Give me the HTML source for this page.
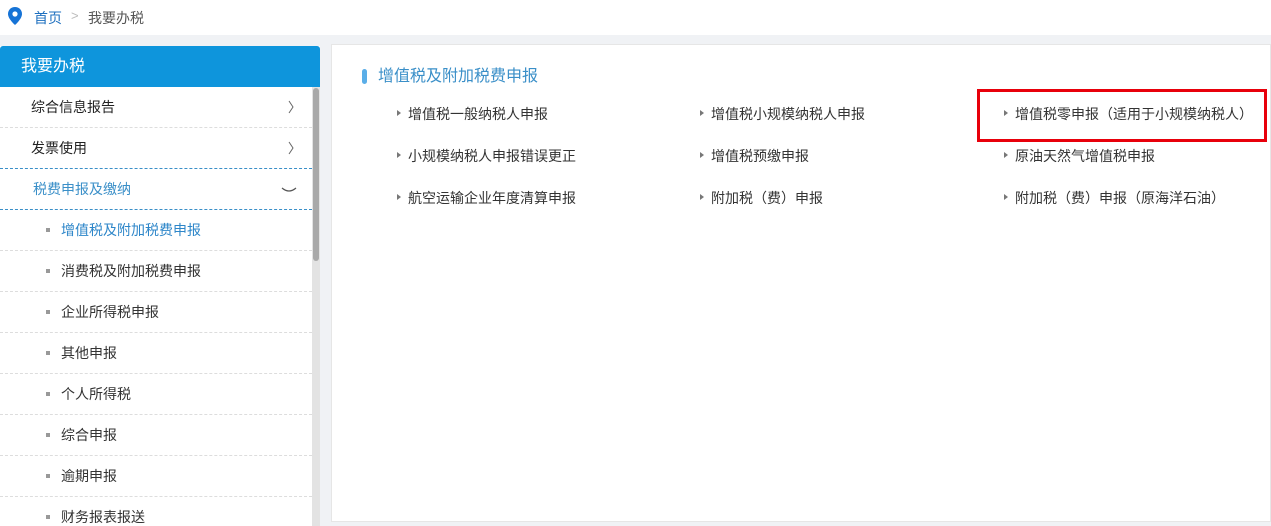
<!DOCTYPE html><html><head><meta charset="utf-8"><style>
*{margin:0;padding:0;box-sizing:border-box}
html,body{width:1271px;height:526px;overflow:hidden}
body{background:#f0f2f5;font-family:"Liberation Sans","Noto Sans CJK SC",sans-serif;font-size:14px;color:#333;position:relative}
.a{position:absolute}
.bc{left:0;top:0;width:1271px;height:35px;background:#fff}
.side{left:0;top:46px;width:320px;height:480px;background:#fff}
.hd{left:0;top:46px;width:320px;height:41px;background:#0e95dc;color:#fff;font-size:16px;line-height:41px;padding-left:21px;border-radius:3px 3px 0 0}
.row{left:0;width:312px;height:41px;line-height:40px;border-bottom:1px dashed #ddd}
.m{padding-left:31px;color:#222}
.s{padding-left:61px;color:#333}
.s:before{content:"";position:absolute;left:46px;top:18px;width:4px;height:4px;background:#999}
.arr{position:absolute;right:18px;top:13px}
.main{left:331px;top:44px;width:940px;height:478px;background:#fff;border:1px solid #e6e6e6}
.it{position:absolute;color:#333;font-size:14px;line-height:20px}
.it:before{content:"";position:absolute;left:-11px;top:6px;border-left:4px solid #777;border-top:3.5px solid transparent;border-bottom:3.5px solid transparent}
</style></head><body>
<div class="a bc"></div>
<svg class="a" style="left:8px;top:7px" width="14" height="18" viewBox="0 0 14 18"><path d="M7 0C3 0 0 3 0 7c0 5 7 11 7 11s7-6 7-11c0-4-3-7-7-7z" fill="#1673d6"/><circle cx="7" cy="7" r="2.6" fill="#fff"/></svg>
<div class="a" style="left:34px;top:8px;color:#1d6fbf">首页</div>
<div class="a" style="left:71px;top:8px;color:#bbb;font-size:13px">&gt;</div>
<div class="a" style="left:88px;top:8px;color:#555">我要办税</div>
<div class="a side"></div>
<div class="a hd">我要办税</div>
<div class="a" style="left:312px;top:87px;width:8px;height:439px;background:#e3e3e3"></div>
<div class="a" style="left:313px;top:88px;width:6px;height:173px;background:#a9a9a9;border-radius:3px"></div>
<div class="a row m" style="top:87px">综合信息报告<svg class="arr" width="6" height="14" viewBox="0 0 6 14"><path d="M1 1l4 6-4 6" fill="none" stroke="#666" stroke-width="1"/></svg></div>
<div class="a row m" style="top:128px;border-bottom:1px dashed #3a8fc8">发票使用<svg class="arr" width="6" height="14" viewBox="0 0 6 14"><path d="M1 1l4 6-4 6" fill="none" stroke="#666" stroke-width="1"/></svg></div>
<div class="a row m" style="top:169px;color:#3a8fc8;border-bottom:1px dashed #3a8fc8;padding-left:33px">税费申报及缴纳<svg class="arr" style="right:15px;top:18px" width="16" height="6" viewBox="0 0 16 6"><path d="M1 1q7 6 14 0" fill="none" stroke="#555" stroke-width="1.2"/></svg></div>
<div class="a row s" style="top:210px;color:#2d86c9">增值税及附加税费申报</div>
<div class="a row s" style="top:251px">消费税及附加税费申报</div>
<div class="a row s" style="top:292px">企业所得税申报</div>
<div class="a row s" style="top:333px">其他申报</div>
<div class="a row s" style="top:374px">个人所得税</div>
<div class="a row s" style="top:415px">综合申报</div>
<div class="a row s" style="top:456px">逾期申报</div>
<div class="a row s" style="top:497px;border:0">财务报表报送</div>
<div class="a main"></div>
<div class="a" style="left:362px;top:69px;width:5px;height:15px;background:#5aaee8;border-radius:3px"></div>
<div class="a" style="left:378px;top:66px;font-size:16px;color:#3a8fc8;line-height:22px">增值税及附加税费申报</div>
<div class="it" style="left:408px;top:104px">增值税一般纳税人申报</div>
<div class="it" style="left:711px;top:104px">增值税小规模纳税人申报</div>
<div class="it" style="left:1015px;top:104px">增值税零申报（适用于小规模纳税人）</div>
<div class="it" style="left:408px;top:146px">小规模纳税人申报错误更正</div>
<div class="it" style="left:711px;top:146px">增值税预缴申报</div>
<div class="it" style="left:1015px;top:146px">原油天然气增值税申报</div>
<div class="it" style="left:408px;top:188px">航空运输企业年度清算申报</div>
<div class="it" style="left:711px;top:188px">附加税（费）申报</div>
<div class="it" style="left:1015px;top:188px">附加税（费）申报（原海洋石油）</div>
<div class="a" style="left:977px;top:89px;width:290px;height:53px;border:3px solid #e8000b"></div>
</body></html>
